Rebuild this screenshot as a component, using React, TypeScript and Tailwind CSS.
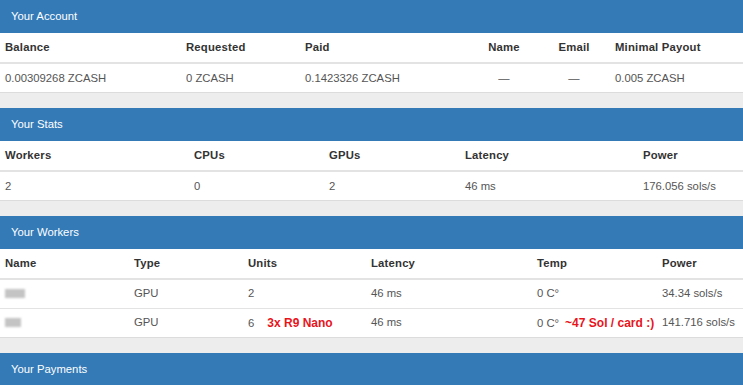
import React from 'react';

type Col = { label: string; w: number; center?: boolean };

const font = { fontFamily: '"Liberation Sans", Arial, Helvetica, sans-serif' };

function Blur({ w }: { w: number }) {
    return <div className="h-[9px] bg-[#c4c4c4] blur-[1px]" style={{ width: w }} />;
}

function Panel({ title, cols, rows }: { title: string; cols: Col[]; rows: React.ReactNode[][] }) {
    return (
        <div className="mb-[15px] bg-white border-b border-[#dcdcdc]">
            <div className="h-[33px] bg-[#337ab7] flex items-center px-[11px] text-white text-[11.3px]">{title}</div>
            <table className="w-full table-fixed border-collapse text-[11.3px]">
                <colgroup>
                    {cols.map(c => <col key={c.label} style={{ width: c.w }} />)}
                </colgroup>
                <thead>
                    <tr className="h-[30px] border-b-2 border-[#e3e3e3]">
                        {cols.map(c => (
                            <th key={c.label} className={`px-[5px] font-bold text-[#333] tracking-[0.2px] ${c.center ? 'text-center' : 'text-left'}`}>
                                {c.label}
                            </th>
                        ))}
                    </tr>
                </thead>
                <tbody>
                    {rows.map((r, i) => (
                        <tr key={i} className={`h-[29px] ${i > 0 ? 'border-t border-[#e3e3e3]' : ''}`}>
                            {r.map((cell, j) => (
                                <td key={j} className={`px-[5px] text-[#555] whitespace-nowrap ${cols[j].center ? 'text-center' : 'text-left'}`}>
                                    {cell}
                                </td>
                            ))}
                        </tr>
                    ))}
                </tbody>
            </table>
        </div>
    );
}

export default function App() {
    const red = 'text-[#e8141c] font-bold text-[12px]';
    return (
        <div className="min-h-screen bg-[#ededed]" style={font}>
            <Panel
                title="Your Account"
                cols={[
                    { label: 'Balance', w: 181 },
                    { label: 'Requested', w: 119 },
                    { label: 'Paid', w: 170 },
                    { label: 'Name', w: 68, center: true },
                    { label: 'Email', w: 72, center: true },
                    { label: 'Minimal Payout', w: 133 },
                ]}
                rows={[['0.00309268 ZCASH', '0 ZCASH', '0.1423326 ZCASH', '—', '—', '0.005 ZCASH']]}
            />
            <Panel
                title="Your Stats"
                cols={[
                    { label: 'Workers', w: 189 },
                    { label: 'CPUs', w: 135 },
                    { label: 'GPUs', w: 136 },
                    { label: 'Latency', w: 178 },
                    { label: 'Power', w: 105 },
                ]}
                rows={[['2', '0', '2', '46 ms', '176.056 sols/s']]}
            />
            <Panel
                title="Your Workers"
                cols={[
                    { label: 'Name', w: 129 },
                    { label: 'Type', w: 114 },
                    { label: 'Units', w: 123 },
                    { label: 'Latency', w: 166 },
                    { label: 'Temp', w: 125 },
                    { label: 'Power', w: 86 },
                ]}
                rows={[
                    [<Blur w={20} />, 'GPU', '2', '46 ms', '0 C°', '34.34 sols/s'],
                    [
                        <Blur w={16} />,
                        'GPU',
                        <>6<span className={`${red} ml-[13px]`}>3x R9 Nano</span></>,
                        '46 ms',
                        <>0 C°<span className={`${red} ml-[6px]`}>~47 Sol / card :)</span></>,
                        '141.716 sols/s',
                    ],
                ]}
            />
            <div className="h-[33px] bg-[#337ab7] flex items-center px-[11px] text-white text-[11.3px]">Your Payments</div>
        </div>
    );
}
